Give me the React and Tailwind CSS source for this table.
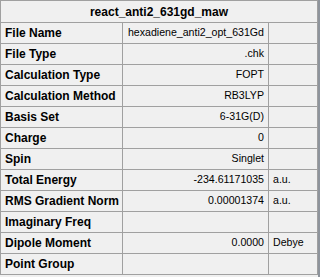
import React from 'react'

const rows = [
    ['File Name', 'hexadiene_anti2_opt_631Gd', ''],
    ['File Type', '.chk', ''],
    ['Calculation Type', 'FOPT', ''],
    ['Calculation Method', 'RB3LYP', ''],
    ['Basis Set', '6-31G(D)', ''],
    ['Charge', '0', ''],
    ['Spin', 'Singlet', ''],
    ['Total Energy', '-234.61171035', 'a.u.'],
    ['RMS Gradient Norm', '0.00001374', 'a.u.'],
    ['Imaginary Freq', '', ''],
    ['Dipole Moment', '0.0000', 'Debye'],
    ['Point Group', '', ''],
]

const App = () => {
    return (
        <div className="w-[320px] h-[277px] bg-[#f0f0f0] text-black" style={{ fontFamily: '"Liberation Sans", Arial, sans-serif' }}>
            <div className="flex h-full">
                <div className="w-[318px] self-start grid grid-cols-[121px_145px_48px] gap-px p-px bg-[#a0a0a0]">
                    <div className="col-span-3 h-[21px] bg-[#f0f0f0] flex items-center justify-center text-[12px] font-bold">
                        react_anti2_631gd_maw
                    </div>
                    {rows.map(([label, value, unit]) => (
                        <React.Fragment key={label}>
                            <div className="h-[20px] bg-[#f0f0f0] flex items-center pl-[4px] text-[12px] font-bold whitespace-nowrap">
                                {label}
                            </div>
                            <div className="h-[20px] bg-[#f0f0f0] flex items-center justify-end pr-[4px] text-[10.6px] whitespace-nowrap">
                                {value}
                            </div>
                            <div className="h-[20px] bg-[#f0f0f0] flex items-center pl-[4px] text-[10.6px] whitespace-nowrap">
                                {unit}
                            </div>
                        </React.Fragment>
                    ))}
                </div>
                <div className="w-[2px] h-full bg-[#8e949c]" />
            </div>
        </div>
    )
}

export default App
